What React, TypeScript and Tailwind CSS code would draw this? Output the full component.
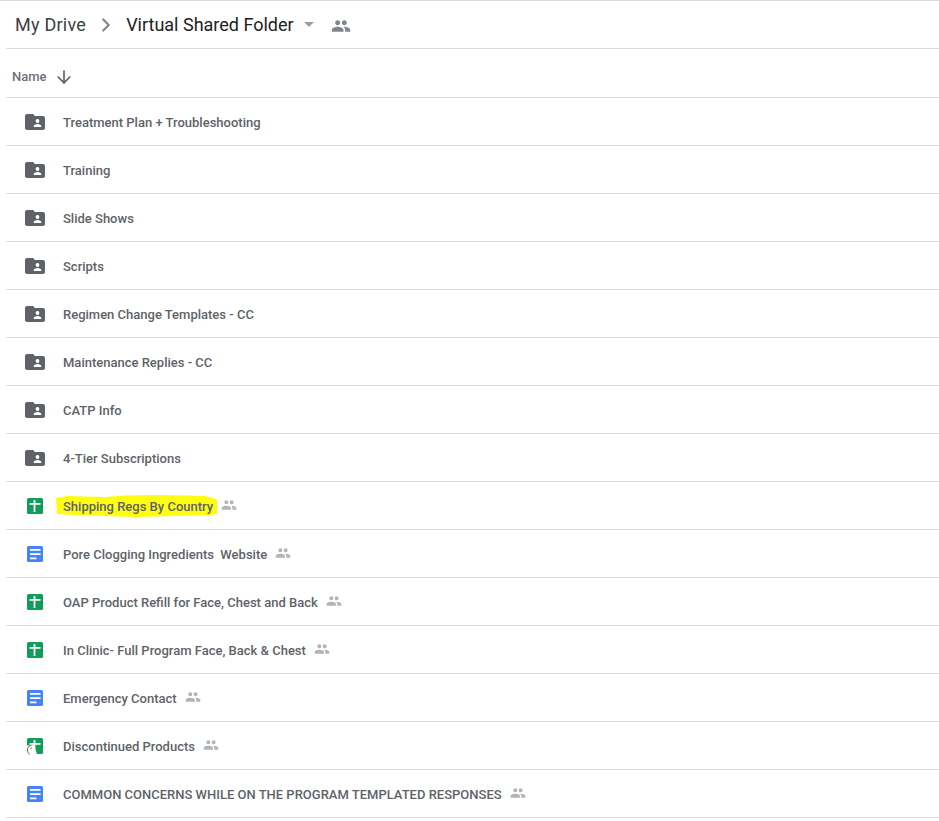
import { ArrowDown, ChevronRight } from "lucide-react";

type Kind = "folder" | "sheet" | "doc";

const rows: { name: string; kind: Kind; cursor?: boolean; marked?: boolean }[] = [
  { name: "Treatment Plan + Troubleshooting", kind: "folder" },
  { name: "Training", kind: "folder" },
  { name: "Slide Shows", kind: "folder" },
  { name: "Scripts", kind: "folder" },
  { name: "Regimen Change Templates - CC", kind: "folder" },
  { name: "Maintenance Replies - CC", kind: "folder" },
  { name: "CATP Info", kind: "folder" },
  { name: "4-Tier Subscriptions", kind: "folder" },
  { name: "Shipping Regs By Country", kind: "sheet", marked: true },
  { name: "Pore Clogging Ingredients\u00a0 Website", kind: "doc" },
  { name: "OAP Product Refill for Face, Chest and Back", kind: "sheet" },
  { name: "In Clinic- Full Program Face, Back & Chest", kind: "sheet" },
  { name: "Emergency Contact", kind: "doc" },
  { name: "Discontinued Products", kind: "sheet", cursor: true },
  { name: "COMMON CONCERNS WHILE ON THE PROGRAM TEMPLATED RESPONSES", kind: "doc" },
];

function PeopleIcon({ className }: { className: string }) {
  return (
    <svg viewBox="0 0 24 24" className={className} fill="currentColor">
      <path d="M16 11c1.66 0 2.99-1.34 2.99-3S17.66 5 16 5s-3 1.34-3 3 1.34 3 3 3zm-8 0c1.66 0 2.99-1.34 2.99-3S9.66 5 8 5 5 6.34 5 8s1.34 3 3 3zm0 2c-2.33 0-7 1.17-7 3.5V19h14v-2.5C15 14.17 10.33 13 8 13zm8 0c-.29 0-.62.02-.97.05 1.16.84 1.97 1.97 1.97 3.45V19h6v-2.5c0-2.33-4.67-3.5-7-3.5z" />
    </svg>
  );
}

function FileIcon({ kind, cursor }: { kind: Kind; cursor?: boolean }) {
  if (kind === "folder") {
    return (
      <svg viewBox="0 0 20 16" className="h-4 w-5" fill="none">
        <path d="M8 0H2C.9 0 0 .9 0 2v12c0 1.100.9 2 2 2h16c1.100 0 2-.9 2-2V4c0-1.100-.9-2-2-2h-8L8 0z" fill="#5f6368" />
        <circle cx="12.5" cy="7" r="1.9" fill="#fff" />
        <path d="M8.700 12.200c0-1.500 2.600-2.300 3.800-2.300s3.800.8 3.800 2.300V13H8.700v-.8z" fill="#fff" />
      </svg>
    );
  }
  if (kind === "sheet") {
    return (
      <svg viewBox="0 0 16 16" className="h-4 w-4 overflow-visible" fill="none">
        <rect width="16" height="16" rx="1.5" fill="#0f9d58" />
        <path d="M6.600 2h1.800v3h5.100v1.800H8.400V14H6.600V6.800H2.500V5h4.100V2z" fill="#fff" />
        {cursor && (
          <>
            <path d="M-1 7.500h6l1.500-1 3.500 9.500V17H-1V7.500z" fill="#fff" />
            <path d="M3.600 7.600C1.600 8.200.4 10 .5 12c.1 1.800.9 3.200 2 4.400" stroke="#55595c" strokeWidth="1" />
            <path d="M3.400 10.600l1.400-.8" stroke="#55595c" strokeWidth="1" />
          </>
        )}
      </svg>
    );
  }
  return (
    <svg viewBox="0 0 16 16" className="h-4 w-4" fill="none">
      <rect width="16" height="16" rx="1.5" fill="#4285f4" />
      <path d="M3 2.900h10.600v1.800H3zM3 7.200h10.600V9H3zM3 11.500h6.400v1.800H3z" fill="#fff" />
    </svg>
  );
}

export default function App() {
  return (
    <div className="h-[821px] w-[939px] overflow-hidden bg-white font-['Roboto',sans-serif]">
      <div className="h-px bg-[#dadce0]" />
      <header className="ml-1.5 flex h-12 items-center border-b border-[#dadce0] pl-[9px]">
        <span className="text-lg leading-6 tracking-[0.25px] text-[#3c4043]">My Drive</span>
        <ChevronRight className="ml-[9px] h-[22px] w-[22px] text-[#80868b]" strokeWidth={2.4} />
        <span className="ml-[9px] text-lg leading-6 text-[#202124]">Virtual Shared Folder</span>
        <span className="ml-[10px] h-0 w-0 border-x-[5px] border-t-[5px] border-x-transparent border-t-[#9aa0a6]" />
        <PeopleIcon className="ml-[17px] mt-[3px] h-5 w-5 text-[#80868b]" />
      </header>
      <div className="ml-1.5 flex h-[49px] items-center border-b border-[#dadce0] pl-1.5 pt-2">
        <span className="text-[13px] font-medium text-[#6e7276]">Name</span>
        <ArrowDown className="ml-[7px] h-5 w-5 text-[#5f6368]" strokeWidth={2} />
      </div>
      {rows.map((row) => (
        <div key={row.name} className="relative ml-1.5 flex h-12 items-center border-b border-[#dadce0]">
          {row.marked && (
            <svg viewBox="0 0 164 24" className="absolute left-[49px] top-3 h-6 w-[164px]">
              <path
                d="M1 4 12 2l38 1 20-1.500L100 1l30 .5 20 .5 10 2.500 2 1.500v14l-7 1-35 1-40 1-30-1-30-1-18-1z"
                fill="#fdfd11"
              />
            </svg>
          )}
          <div className="flex w-[57px] justify-center pl-px">
            <FileIcon kind={row.kind} cursor={row.cursor} />
          </div>
          <span className="relative pt-0.5 text-[13px] font-medium text-[#5f6368]">{row.name}</span>
          {row.kind !== "folder" && (
            <PeopleIcon className="ml-2 h-4 w-4 -translate-y-px text-[#b2b5b8]" />
          )}
        </div>
      ))}
    </div>
  );
}
